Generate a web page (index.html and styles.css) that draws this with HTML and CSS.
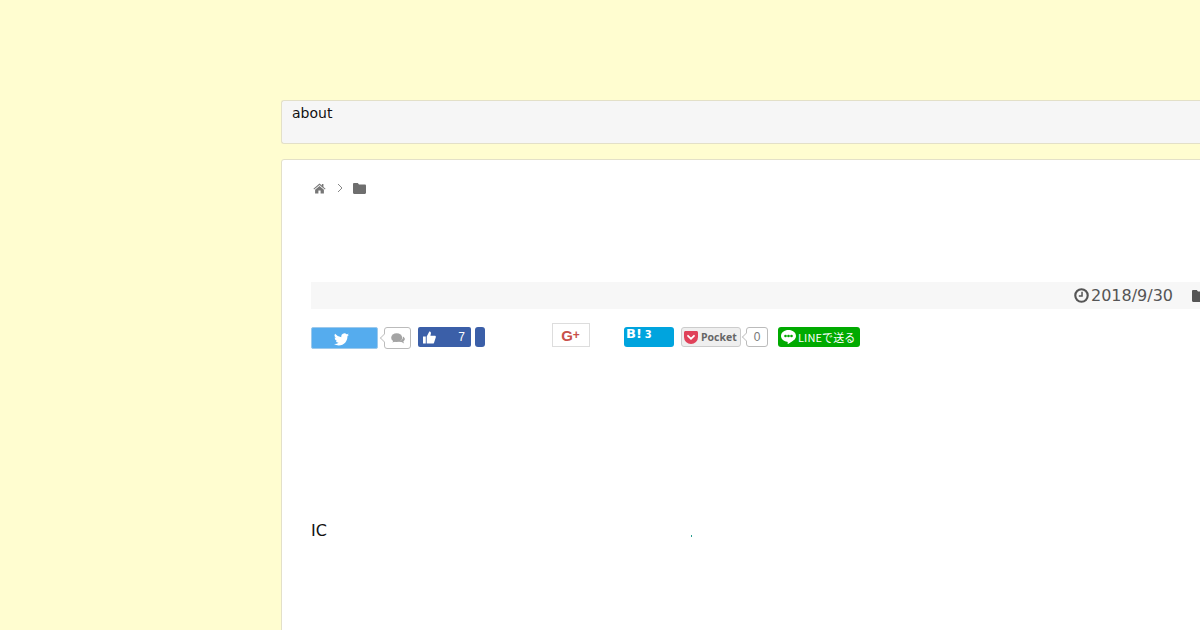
FILE: index.html
```html
<!DOCTYPE html>
<html lang="ja">
<head>
<meta charset="utf-8">
<title>about</title>
<link rel="stylesheet" href="styles.css">
</head>
<body>
<div class="wrap">
  <nav class="nav">about</nav>
  <main class="card">
    <div class="crumbs">
      <svg class="ic-home" viewBox="0 0 14 12"><path d="M7 0.600 0.400 6.200l.7.8L7 2.100l5.900 4.900.7-.8-2.300-1.900V1h-1.700v1.800zM2.200 7.300V11.400h3.600V8.200h2.400v3.200h3.600V7.300L7 3.300z" fill="#777"/></svg>
      <svg class="ic-chev" viewBox="0 0 6 10"><path d="M1 1l4 4-4 4" fill="none" stroke="#888" stroke-width="1"/></svg>
      <svg class="ic-folder" viewBox="0 0 13 11"><path d="M1.200 0h3.600l1.200 1.600h5.800c.7 0 1.200.5 1.200 1.200v7c0 .7-.5 1.200-1.200 1.200H1.200C.5 11 0 10.500 0 9.800V1.200C0 .5.500 0 1.200 0z" fill="#6e6e6e"/></svg>
    </div>
    <div class="meta">
      <svg class="ic-clock" viewBox="0 0 14 14"><circle cx="7" cy="7" r="5.800" fill="none" stroke="#555" stroke-width="2"/><path d="M7.500 3.500v4h-3" fill="none" stroke="#555" stroke-width="1.400"/></svg>
      <span class="date">2018/9/30</span>
      <svg class="ic-cat" viewBox="0 0 13 12"><path d="M1.200 0h3.600l1.200 1.600h5.800c.7 0 1.200.5 1.200 1.200v8c0 .7-.5 1.200-1.200 1.200H1.200C.5 12 0 11.500 0 10.800V1.200C0 .5.500 0 1.200 0z" fill="#555"/></svg>
    </div>
    <div class="share">
      <a class="btn tw"><svg viewBox="0 0 24 20" class="ic-tw"><path d="M24 2.400a9.800 9.800 0 0 1-2.800.8A5 5 0 0 0 23.300.500a9.800 9.800 0 0 1-3.100 1.200 4.900 4.900 0 0 0-8.400 4.500A14 14 0 0 1 1.700.900a4.900 4.900 0 0 0 1.500 6.600 4.900 4.900 0 0 1-2.200-.6v.1a4.900 4.900 0 0 0 3.900 4.800 4.900 4.900 0 0 1-2.200.1 4.900 4.900 0 0 0 4.600 3.400A9.900 9.900 0 0 1 0 17.300 14 14 0 0 0 7.500 19.500c9.100 0 14-7.500 14-14v-.6A10 10 0 0 0 24 2.400z" fill="#fff"/></svg></a>
      <a class="bubble tw-count"><svg viewBox="0 0 16 13" class="ic-cmt"><ellipse cx="6.500" cy="5" rx="6.300" ry="5" fill="#a4a4a4"/><path d="M3 8l-1.500 2.500L6 9z" fill="#a4a4a4"/><path d="M13.600 3.600c1.400.7 2.200 1.800 2.200 3 0 1.100-.7 2.100-1.800 2.800l1 2.200-3-1.700c-1.500.1-3-.2-4-1 3.300 0 6-1.900 5.600-5.300z" fill="#a4a4a4"/></svg></a>
      <a class="btn fb"><svg viewBox="0 0 14 13" class="ic-thumb"><path d="M0 5.500h3v7.500H0zM4 5.500 6.800 0c1.300 0 2 1 1.700 2.200L8 4.500h4.600c.9 0 1.500.9 1.200 1.800l-1.900 5.800c-.2.600-.7.900-1.300.9H4z" fill="#fff"/></svg><span class="fb-num">7</span></a>
      <a class="btn fb-side"></a>
      <a class="gplus"><span class="gplus-g">G</span><span class="gplus-p">+</span></a>
      <a class="btn hatena"><span class="hb">B!</span><span class="hb-num">3</span></a>
      <a class="pocket"><svg viewBox="0 0 14 13" class="ic-pocket"><path d="M1.500 0h11c.8 0 1.500.7 1.500 1.500V6a7 7 0 0 1-14 0V1.500C0 .7.700 0 1.500 0z" fill="#e0425a"/><path d="M4 4.800l3 3 3-3" fill="none" stroke="#fff" stroke-width="1.800" stroke-linecap="round"/></svg><span>Pocket</span></a>
      <a class="bubble pk-count">0</a>
      <a class="line"><svg viewBox="0 0 15 14" class="ic-line"><path d="M7.500 0C3.400 0 0 2.600 0 5.900c0 2.900 2.600 5.300 6.200 5.800.8.200.5 1.600.4 2.200 0 .3.400.3 1-.1 1-.7 5.100-3 6.400-4.700C14.700 8 15 7 15 5.900 15 2.600 11.600 0 7.500 0z" fill="#fff"/><circle cx="4.500" cy="6" r="1.300" fill="#0a0"/><circle cx="7.500" cy="6" r="1.300" fill="#0a0"/><circle cx="10.500" cy="6" r="1.300" fill="#0a0"/></svg><span class="line-label">LINEで送る</span></a>
    </div>
    <div class="body-row">
      <span class="ic-text">IC</span>
      <i class="dot"></i>
    </div>
  </main>
</div>
</body>
</html>
```

FILE: styles.css
```css
html, body {
  margin: 0;
  height: 630px;
  overflow: hidden;
}
body {
  background: #fffdd0;
  font-family: "DejaVu Sans", sans-serif;
  color: #111;
}
.wrap {
  width: 1100px;
  margin-left: 281px;
  padding-top: 100px;
}
.nav {
  box-sizing: border-box;
  height: 44px;
  padding: 4px 10px;
  background: #f6f6f6;
  border: 1px solid #e3e0c8;
  border-right: 0;
  border-radius: 3px 0 0 3px;
  font-size: 14px;
  line-height: 17px;
}
.card {
  box-sizing: border-box;
  height: 520px;
  margin-top: 15px;
  padding: 0 29px;
  background: #fff;
  border: 1px solid #e3e0c8;
  border-radius: 3px 0 0 0;
}
.crumbs {
  display: flex;
  align-items: center;
  height: 14px;
  margin-top: 21px;
  padding-left: 2px;
}
.ic-home { width: 13px; height: 11px; }
.ic-chev { width: 6px; height: 10px; margin-left: 11px; }
.ic-folder { width: 13px; height: 11px; margin-left: 10px; }
.meta {
  display: flex;
  align-items: center;
  height: 27px;
  margin-top: 87px;
  padding-left: 763px;
  background: #f7f7f7;
  color: #555;
  font-size: 16px;
}
.ic-clock { width: 15px; height: 15px; flex: none; }
.date { margin-left: 2px; }
.ic-cat { width: 13px; height: 12px; margin-left: 19px; flex: none; }
.share {
  display: flex;
  align-items: flex-start;
  height: 30px;
  margin-top: 14px;
}
.btn { display: flex; box-sizing: border-box; border-radius: 2px; }
.tw {
  align-items: center;
  justify-content: center;
  width: 67px;
  height: 22px;
  margin-top: 4px;
  padding-right: 6px;
  background: #55acee;
  border: 1px solid #9cc9ec;
}
.ic-tw { width: 15px; height: 13px; margin-top: 2px; }
.bubble {
  display: flex;
  align-items: center;
  justify-content: center;
  position: relative;
  box-sizing: border-box;
  background: #fff;
  border: 1px solid #bbb;
  border-radius: 3px;
  color: #777;
}
.bubble::before {
  content: "";
  position: absolute;
  left: -4px;
  top: 50%;
  width: 5px;
  height: 5px;
  margin-top: -3px;
  background: #fff;
  border-left: 1px solid #ccc;
  border-bottom: 1px solid #ccc;
  transform: rotate(45deg);
}
.tw-count {
  width: 27px;
  height: 22px;
  margin: 4px 0 0 6px;
}
.ic-cmt { width: 14px; height: 12px; margin-top: 2px; }
.fb {
  align-items: center;
  width: 53px;
  height: 20px;
  margin: 4px 0 0 7px;
  padding: 0 6px 0 5px;
  background: #3b5fa8;
  color: #fff;
  font-family: "Liberation Sans", sans-serif;
  font-size: 12px;
}
.ic-thumb { width: 13px; height: 13px; }
.fb-num { margin-left: auto; }
.fb-side {
  width: 10px;
  height: 20px;
  margin: 4px 0 0 4px;
  background: #3b5fa8;
  border-radius: 3px;
}
.gplus {
  display: flex;
  align-items: center;
  justify-content: center;
  box-sizing: border-box;
  width: 38px;
  height: 24px;
  margin-left: 67px;
  padding-right: 1px;
  border: 1px solid #ddd;
  color: #c8504a;
  font-family: "Liberation Sans", sans-serif;
  font-weight: 700;
}
.gplus-g { font-size: 15px; }
.gplus-p { font-size: 12px; }
.hatena {
  align-items: flex-start;
  width: 50px;
  height: 20px;
  margin: 4px 0 0 34px;
  padding-left: 2px;
  background: #00a4de;
  border-radius: 3px;
  color: #fff;
  font-weight: 700;
  line-height: 13px;
}
.hb { font-size: 13px; }
.hb-num { margin-left: 3px; font-size: 10px; line-height: 15px; }
.pocket {
  display: flex;
  align-items: center;
  box-sizing: border-box;
  width: 60px;
  height: 20px;
  margin: 4px 0 0 7px;
  padding-left: 2px;
  background: #efefef;
  border: 1px solid #ccc;
  border-radius: 3px;
  color: #666;
  font-size: 10.500px;
  font-weight: 700;
  font-family: "Open Sans", sans-serif;
}
.ic-pocket { width: 14px; height: 13px; margin-right: 3px; flex: none; }
.pk-count {
  width: 22px;
  height: 20px;
  margin: 4px 0 0 5px;
  font-family: "Liberation Sans", sans-serif;
  font-size: 12px;
}
.line {
  display: flex;
  align-items: center;
  box-sizing: border-box;
  width: 82px;
  height: 20px;
  margin: 4px 0 0 10px;
  padding-left: 3px;
  background: #0a0;
  border-radius: 3px;
  color: #fff;
  font-family: "Noto Sans CJK JP", "Noto Sans", sans-serif;
  font-size: 11px;
  white-space: nowrap;
}
.ic-line { width: 15px; height: 14px; margin-right: 2px; flex: none; }
.line-label { letter-spacing: 0.100px; }
.body-row {
  display: flex;
  align-items: flex-start;
  margin-top: 168px;
  font-size: 16px;
  line-height: 19px;
  color: #111;
}
.ic-text { width: 380px; }
.dot {
  width: 1px;
  height: 2px;
  margin-top: 14px;
  background: #2a9d8f;
}
```
